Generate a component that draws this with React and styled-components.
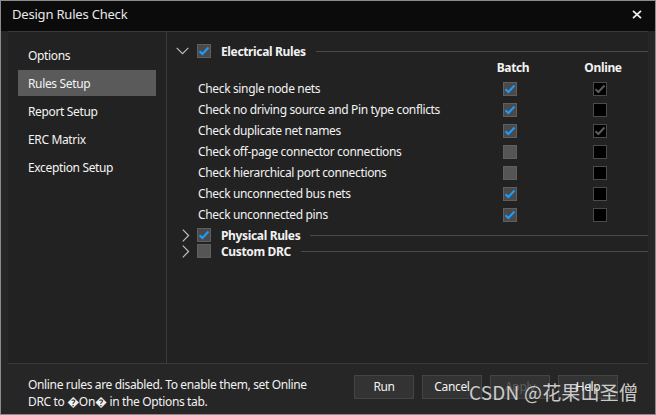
import React from "react";
import styled, { createGlobalStyle } from "styled-components";

const Global = createGlobalStyle`
  html, body { margin: 0; padding: 0; background: #222; }
  * { box-sizing: border-box; }
  body { font-family: "Noto Sans", "DejaVu Sans", sans-serif; }
`;

const Window = styled.div`
  width: 656px;
  height: 415px;
  border: 1px solid #8c8c8c;
  background: #262626;
  display: flex;
  flex-direction: column;
  position: relative;
  color: #f2f2f2;
  font-size: 12px;
  letter-spacing: -0.35px;
  overflow: hidden;
`;

const TitleBar = styled.div`
  height: 30px;
  background: #0b0b0b;
  display: flex;
  align-items: center;
  justify-content: space-between;
  padding: 0 13px 4px 11px;
  font-size: 13px;
  letter-spacing: -0.2px;
  color: #e8e8e8;
`;

const Body = styled.div`
  flex: 0 0 333px;
  margin: 0 7px;
  border-top: 1px solid #3b3b3b;
  border-bottom: 1px solid #3b3b3b;
  background: #222222;
  display: flex;
`;

const Sidebar = styled.div`
  width: 159px;
  border-right: 1px solid #3b3b3b;
  padding: 10px 10px 0;
  display: flex;
  flex-direction: column;
  gap: 2px;
`;

const NavItem = styled.div`
  height: 26px;
  display: flex;
  align-items: center;
  padding-left: 10px;
  background: ${(p) => (p.$active ? "#5a5a5a" : "transparent")};
  color: #f4f4f4;
`;

const Main = styled.div`
  flex: 1;
  padding: 11px 0 0 8px;
  display: flex;
  flex-direction: column;
`;

const GroupHeader = styled.div`
  height: 16px;
  margin-top: ${(p) => p.$mt || 0}px;
  display: flex;
  align-items: center;
  font-weight: 700;
`;

const Chevron = styled.span`
  width: 22px;
  display: flex;
  justify-content: ${(p) => (p.$open ? "flex-start" : "center")};
  padding-left: ${(p) => (p.$open ? "1px" : "0")};
  svg { display: block; }
`;

const GroupTitle = styled.span`
  margin-left: 10px;
  white-space: nowrap;
`;

const Rule = styled.span`
  flex: 1;
  height: 1px;
  background: #4a4a4a;
  margin-left: 10px;
`;

const Table = styled.div`
  display: grid;
  grid-template-columns: 1fr 90px 90px;
  grid-auto-rows: 21px;
  padding-left: 23px;
  padding-right: 3px;
  margin-top: -2px;
`;

const HeadCell = styled.div`
  font-weight: 700;
  display: flex;
  align-items: center;
  justify-content: center;
  padding-left: 6px;
`;

const Label = styled.div`
  display: flex;
  align-items: center;
  white-space: nowrap;
`;

const Cell = styled.div`
  display: flex;
  align-items: center;
  justify-content: center;
`;

const Box = styled.span`
  width: 14px;
  height: 14px;
  border: 1px solid ${(p) => (p.$dark ? "#4a4a4a" : "#5f5f5f")};
  background: ${(p) => (p.$dark ? "#000" : p.$checked ? "#4a4a4a" : "#555555")};
  display: inline-flex;
  align-items: center;
  justify-content: center;
  flex: none;
  svg { display: block; }
`;

const Footer = styled.div`
  flex: 1;
  display: flex;
  align-items: flex-start;
  justify-content: space-between;
  padding: 11px 37px 0 27px;
`;

const Note = styled.div`
  line-height: 17px;
  margin-top: 1px;
  color: #f2f2f2;
`;

const Buttons = styled.div`
  display: flex;
  gap: 8px;
`;

const Button = styled.button`
  width: 60px;
  height: 24px;
  background: #333333;
  border: 1px solid #444;
  color: ${(p) => (p.disabled ? "#5c5c5c" : "#f2f2f2")};
  font-family: inherit;
  font-size: 12px;
  letter-spacing: -0.35px;
  padding: 0 0 1px;
`;

const Watermark = styled.div`
  position: absolute;
  left: 468px;
  top: 377px;
  font-family: "Noto Sans CJK SC", "Noto Sans", sans-serif;
  font-size: 19px;
  color: rgba(225, 225, 225, 0.88);
  white-space: nowrap;
  pointer-events: none;
  letter-spacing: 0.2px;
`;

const Check = ({ color }) => (
  <svg width="12" height="10" viewBox="0 0 12 10">
    <path d="M1.5 5.2 L4.4 8 L10.5 1.5" fill="none" stroke={color} strokeWidth="2" />
  </svg>
);

const CheckBox = ({ checked, dark }) => (
  <Box $checked={checked} $dark={dark}>
    {checked && <Check color={dark ? "#5c5c5c" : "#1b9cff"} />}
  </Box>
);

const ChevronDown = () => (
  <svg width="13" height="8" viewBox="0 0 13 8">
    <path d="M0.7 0.8 L6.5 6.6 L12.3 0.8" fill="none" stroke="#bdbdbd" strokeWidth="1.2" />
  </svg>
);

const ChevronRight = () => (
  <svg width="8" height="13" viewBox="0 0 8 13">
    <path d="M0.8 0.7 L6.6 6.5 L0.8 12.3" fill="none" stroke="#bdbdbd" strokeWidth="1.2" />
  </svg>
);

const CloseIcon = () => (
  <svg width="10" height="9" viewBox="0 0 10 9">
    <path d="M1 0.8 L9 8.2 M9 0.8 L1 8.2" stroke="#f0f0f0" strokeWidth="1.8" />
  </svg>
);

const rules = [
  ["Check single node nets", true, true],
  ["Check no driving source and Pin type conflicts", true, false],
  ["Check duplicate net names", true, true],
  ["Check off-page connector connections", false, false],
  ["Check hierarchical port connections", false, false],
  ["Check unconnected bus nets", true, false],
  ["Check unconnected pins", true, false],
];

const nav = ["Options", "Rules Setup", "Report Setup", "ERC Matrix", "Exception Setup"];

export default function App() {
  return (
    <Window>
      <Global />
      <TitleBar>
        <span>Design Rules Check</span>
        <CloseIcon />
      </TitleBar>
      <Body>
        <Sidebar>
          {nav.map((n) => (
            <NavItem key={n} $active={n === "Rules Setup"}>
              {n}
            </NavItem>
          ))}
        </Sidebar>
        <Main>
          <GroupHeader>
            <Chevron $open>
              <ChevronDown />
            </Chevron>
            <CheckBox checked />
            <GroupTitle>Electrical Rules</GroupTitle>
            <Rule />
          </GroupHeader>
          <Table>
            <Label />
            <HeadCell>Batch</HeadCell>
            <HeadCell>Online</HeadCell>
            {rules.map(([t, b, o]) => (
              <React.Fragment key={t}>
                <Label>{t}</Label>
                <Cell>
                  <CheckBox checked={b} />
                </Cell>
                <Cell>
                  <CheckBox checked={o} dark />
                </Cell>
              </React.Fragment>
            ))}
          </Table>
          <GroupHeader $mt={2}>
            <Chevron>
              <ChevronRight />
            </Chevron>
            <CheckBox checked />
            <GroupTitle>Physical Rules</GroupTitle>
            <Rule />
          </GroupHeader>
          <GroupHeader>
            <Chevron>
              <ChevronRight />
            </Chevron>
            <CheckBox />
            <GroupTitle>Custom DRC</GroupTitle>
            <Rule />
          </GroupHeader>
        </Main>
      </Body>
      <Footer>
        <Note>
          Online rules are disabled. To enable them, set Online
          <br />
          DRC to {"\uFFFD"}On{"\uFFFD"} in the Options tab.
        </Note>
        <Buttons>
          <Button>Run</Button>
          <Button>Cancel</Button>
          <Button disabled>Apply</Button>
          <Button>Help</Button>
        </Buttons>
      </Footer>
      <Watermark>CSDN @花果山圣僧</Watermark>
    </Window>
  );
}
